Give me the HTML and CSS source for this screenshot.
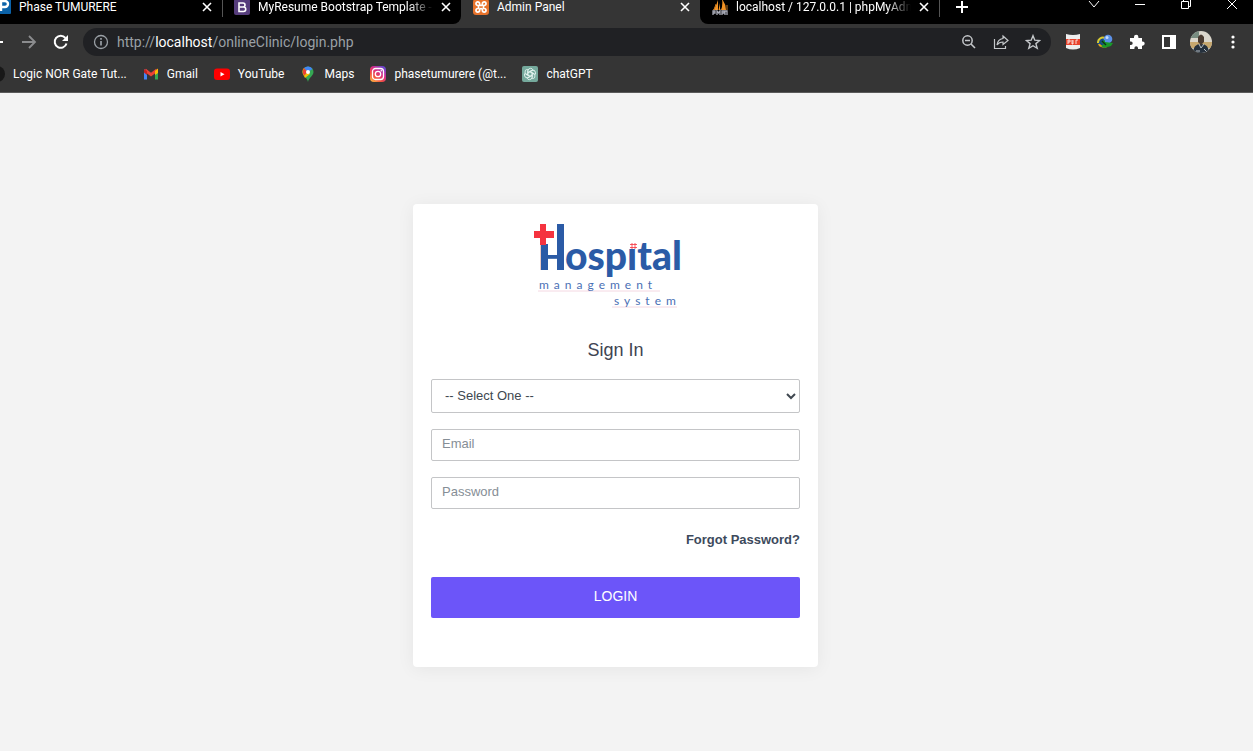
FILE: index.html
```html
<!DOCTYPE html>
<html lang="en">
<head>
<meta charset="utf-8">
<meta name="viewport" content="width=device-width, initial-scale=1">
<title>Admin Panel</title>
<link rel="stylesheet" href="styles.css">
</head>
<body>
<div class="window">
  <header class="browser">
    <div class="tabstrip">
      <div class="tab tab-first">
        <svg class="icon" viewBox="0 0 16 16"><rect y="-2" width="16" height="16" rx="1" fill="#0b62a8"/><path d="M6 11V1h4a3 3 0 0 1 0 6H6" fill="none" stroke="#fff" stroke-width="2.4"/></svg>
        <span class="tab-title">Phase TUMURERE</span>
        <button class="tab-close" aria-label="Close tab"><svg viewBox="0 0 10 10"><path d="M1 1l8 8M9 1l-8 8"/></svg></button>
      </div>
      <div class="tab tab-before">
        <svg class="icon" viewBox="0 0 16 16"><rect y="-1" width="16" height="16" rx="2" fill="#563d7c"/><path d="M5 3h4a2 2 0 0 1 0 4H5h4.500a2.200 2.200 0 0 1 0 4.500H5z" fill="none" stroke="#fff" stroke-width="1.600"/></svg>
        <span class="tab-title tab-title-long">MyResume Bootstrap Template -</span>
        <button class="tab-close" aria-label="Close tab"><svg viewBox="0 0 10 10"><path d="M1 1l8 8M9 1l-8 8"/></svg></button>
      </div>
      <div class="tab tab-active">
        <svg class="icon" viewBox="0 0 16 16"><rect y="-1" width="16" height="16" rx="3" fill="#e8732c"/><path d="M5.500 5.500H4.800a1.800 1.800 0 1 1 1.800-1.800q0 1.800 1.400 1.800t1.400-1.800a1.800 1.800 0 1 1 1.800 1.800h-.7v3h.7a1.800 1.800 0 1 1-1.800 1.800q0-1.800-1.400-1.800t-1.400 1.800a1.800 1.800 0 1 1-1.800-1.800h.7z" fill="none" stroke="#fff" stroke-width="1.700"/></svg>
        <span class="tab-title">Admin Panel</span>
        <button class="tab-close" aria-label="Close tab"><svg viewBox="0 0 10 10"><path d="M1 1l8 8M9 1l-8 8"/></svg></button>
      </div>
      <div class="tab tab-after">
        <svg class="icon" viewBox="0 0 16 16"><path d="M6 0v10H1Q5 5 6 0zM10-1q4 5 4 11H9q2-5 1-11zM8 3v7H6.500z" fill="#f39324"/><path d="M4 4L2 10M15 5v5" stroke="#c6781f"/><path d="M1 15v-4h2v2H1m4 2v-4l1.500 2L8 11v4m2 0v-4h2v2h-2m3 2v-4h2v4" fill="none" stroke="#aaacb8" stroke-width="1.300"/></svg>
        <span class="tab-title tab-title-long">localhost / 127.0.0.1 | phpMyAdm</span>
        <button class="tab-close" aria-label="Close tab"><svg viewBox="0 0 10 10"><path d="M1 1l8 8M9 1l-8 8"/></svg></button>
      </div>
      <button class="new-tab" aria-label="New tab"><svg viewBox="0 0 12 12"><path d="M6 0v12M0 6h12" stroke="#fff" stroke-width="2"/></svg></button>
      <div class="window-controls">
        <button aria-label="Search tabs"><svg viewBox="0 0 12 12"><path d="M1 2l5 6 5-6"/></svg></button>
        <button aria-label="Minimize"><svg viewBox="0 0 12 12"><path d="M1 5.500h10"/></svg></button>
        <button aria-label="Restore"><svg viewBox="0 0 12 12"><path d="M1.500 2.500h7v7h-7zM3.500 2V0.500h7v7H9"/></svg></button>
        <button aria-label="Close"><svg viewBox="0 0 12 12"><path d="M1 0l10 10M11 0L1 10"/></svg></button>
      </div>
    </div>

    <div class="toolbar">
      <button class="tool tool-back" aria-label="Back"><svg viewBox="0 0 16 16"><path d="M14 8H2M8 2L2 8l6 6" fill="none" stroke="#fff" stroke-width="2"/></svg></button>
      <button class="tool" aria-label="Forward"><svg viewBox="0 0 16 16"><path d="M1 8h13M8 2l6 6-6 6" fill="none" stroke="#8b8c8e" stroke-width="1.800"/></svg></button>
      <button class="tool" aria-label="Reload"><svg viewBox="0 0 16 16"><path d="M13.500 9.500A6 6 0 1 1 12.400 4" fill="none" stroke="#fff" stroke-width="2"/><path d="M15 1v6H9z" fill="#fff"/></svg></button>
      <div class="omnibox">
        <svg class="icon" viewBox="0 0 16 16"><circle cx="8" cy="8" r="6.500" fill="none" stroke="#9aa0a6" stroke-width="1.300"/><path d="M8 7v4.500M8 4v1.700" stroke="#9aa0a6" stroke-width="1.700"/></svg>
        <span class="url">http://<b>localhost</b>/onlineClinic/login.php</span>
        <button class="tool" aria-label="Zoom"><svg viewBox="0 0 16 16"><path d="M10 10l4 4M4 6.500h5" stroke="#c4c7ca" stroke-width="1.600"/><circle cx="6.500" cy="6.500" r="4.700" fill="none" stroke="#c4c7ca" stroke-width="1.500"/></svg></button>
        <button class="tool" aria-label="Share"><svg viewBox="0 0 16 16"><path d="M1.500 5v9.500h11V12M10 2l5 4.500-5 4V8Q6 8 4 11q.5-5.500 6-6.500z" fill="none" stroke="#c4c7ca" stroke-width="1.200"/></svg></button>
        <button class="tool" aria-label="Bookmark this page"><svg viewBox="0 0 16 16"><path d="M8 1.700l1.800 4.500 4.900.3-3.800 3.100 1.300 4.700L8 11.700l-4.200 2.600 1.300-4.700L1.300 6.500l4.900-.3z" fill="none" stroke="#c4c7ca" stroke-width="1.400"/></svg></button>
      </div>
      <div class="extensions">
        <button class="tool" aria-label="PDF extension"><svg viewBox="0 0 16 16"><path d="M1 0q7 2 14 0v14q-7 3-14 0z" fill="#eee"/><path d="M1 5h14v6H1z" fill="#e9432c"/><path d="M3 10V6h2v2H3M7 6v4h1V6M11 10V6h2" fill="none" stroke="#fff" stroke-width=".8"/></svg></button>
        <button class="tool" aria-label="Download manager"><svg viewBox="0 0 16 16"><ellipse cx="6" cy="8" rx="6" ry="5" fill="#174a86"/><path d="M1 9a5 5 0 0 1 7-5" fill="none" stroke="#d9c92e" stroke-width="2"/><path d="M2 10a5 3 0 0 0 8 2" fill="none" stroke="#e2a516" stroke-width="2"/><circle cx="11" cy="5" r="4.300" fill="#5c91e8"/><circle cx="10" cy="3.500" r="1.500" fill="#c4dbfb"/><path d="M4 8l4-2v2l8 1-2 3-7 2-3-2 3-2z" fill="#189a28"/><path d="M5 7l4 4" stroke="#0c2d18" stroke-width="1.500"/></svg></button>
        <button class="tool" aria-label="Extensions"><svg viewBox="0 0 16 16"><path d="M1 4h4V3a2.200 2.200 0 0 1 4.400 0v1H13v3.500h.6a2.100 2.100 0 0 1 0 4.200H13V15H9v-1a1.800 1.800 0 0 0-3.600 0v1H1v-4h1a1.700 1.700 0 0 0 0-3.400H1z" fill="#fff"/></svg></button>
        <button class="tool" aria-label="Side panel"><svg viewBox="0 0 16 16"><path d="M1 1h14v14H1zm2 2v10h6V3z" fill="#fff" fill-rule="evenodd"/></svg></button>
        <button class="tool tool-avatar" aria-label="Profile"><svg viewBox="0 0 22 22"><defs><clipPath id="face"><circle cx="11" cy="11" r="11"/></clipPath></defs><g clip-path="url(#face)"><path d="M0 0h22v22H0z" fill="#dad6cb"/><path d="M0 11h22v6H0z" fill="#c6a76e"/><path d="M0 0h9v7H0z" fill="#788c80"/><path d="M3 22q0-9 8-9t8 9z" fill="#26313d"/><path d="M8 6q3-5 6 0v5l-3 3-3-3z" fill="#4a3b30"/><path d="M9 13l2 4 3-4M6 20h4M14 18l3 3" fill="none" stroke="#bac1c6"/></g></svg></button>
        <button class="tool" aria-label="Menu"><svg viewBox="0 0 16 16"><circle cx="8" cy="3" r="1.600" fill="#fff"/><circle cx="8" cy="8" r="1.600" fill="#fff"/><circle cx="8" cy="13" r="1.600" fill="#fff"/></svg></button>
      </div>
    </div>

    <nav class="bookmarks">
      <a href="#"><svg class="icon" viewBox="0 0 16 16"><circle cx="8" cy="8" r="8" fill="#181818"/></svg><span>Logic NOR Gate Tut...</span></a>
      <a href="#"><svg class="icon" viewBox="0 0 16 16"><path d="M1 3v10.500h3V5z" fill="#4285f4"/><path d="M12 5v8.500h3V3z" fill="#34a853"/><path d="M2 4l6 4.700L14 4" fill="none" stroke="#ea4335" stroke-width="3"/><path d="M12 5l3-2.500V7l-3 2z" fill="#fbbc04"/><path d="M1 3v3.500L4 9V5z" fill="#c5221f"/></svg><span>Gmail</span></a>
      <a href="#"><svg class="icon" viewBox="0 0 16 16"><rect y="2.500" width="16" height="11.500" rx="3" fill="#f00"/><path d="M6.500 6v4.500l4-2.250z" fill="#fff"/></svg><span>YouTube</span></a>
      <a href="#"><svg class="icon" viewBox="0 0 16 16"><path d="M8 .5a5.500 5.500 0 0 0-5.500 5.500c0 4 4.500 5 5.500 10 1-5 5.500-6 5.500-10A5.500 5.500 0 0 0 8 .5z" fill="#34a853"/><path d="M8 6L4 10A7 7 0 0 1 2.500 6 5 5 0 0 1 4 2z" fill="#fbbc04"/><path d="M4 2l4 4-4 3.500A7 7 0 0 1 4 2z" fill="#ea4335"/><path d="M4 2a5.500 5.500 0 0 1 8.500 1L8 6z" fill="#4285f4"/><path d="M4 10l4-4 2 2-5 4z" fill="#fbbc04"/><circle cx="8" cy="6" r="2" fill="#fff"/></svg><span>Maps</span></a>
      <a href="#"><svg class="icon" viewBox="0 0 16 16"><defs><linearGradient id="ig" x1="0" y1="1" x2=".8" y2="0"><stop offset="0" stop-color="#fdc844"/><stop offset=".35" stop-color="#f4533c"/><stop offset=".65" stop-color="#d62b8a"/><stop offset="1" stop-color="#6548d0"/></linearGradient></defs><rect width="16" height="16" rx="4" fill="url(#ig)"/><rect x="2.500" y="2.500" width="11" height="11" rx="3" fill="none" stroke="#fff" stroke-width="1.300"/><circle cx="8" cy="8" r="2.700" fill="none" stroke="#fff" stroke-width="1.300"/><circle cx="11.300" cy="4.700" r=".8" fill="#fff"/></svg><span>phasetumurere (@t...</span></a>
      <a href="#"><svg class="icon" viewBox="0 0 16 16"><rect width="16" height="16" rx="2" fill="#75a99c"/><g fill="none" stroke="#e4f3ef" stroke-width=".9"><path id="petal" d="M6 9V4.500a2.600 2.600 0 0 1 5-.5M6 6.500l4-2.300"/><use href="#petal" transform="rotate(60 8 8)"/><use href="#petal" transform="rotate(120 8 8)"/><use href="#petal" transform="rotate(180 8 8)"/><use href="#petal" transform="rotate(240 8 8)"/><use href="#petal" transform="rotate(300 8 8)"/></g></svg><span>chatGPT</span></a>
    </nav>
  </header>

  <main class="page">
    <form class="card">
      <svg class="logo" viewBox="0 0 180 110" role="img" aria-label="Hospital management system">
        <g class="logo-name"><text class="logo-initial" x="12" y="60">H</text><text x="39" y="60">ospital</text></g>
        <path d="M15 34h7v26h-7zM31 14h7v46h-7z" fill="#2b5ba6"/>
        <path d="M102 26h10v13h-10z" fill="#fff"/>
        <path d="M14 14h6v7h8v7h-8v7h-6v-7H8v-7h6z" fill="#f5333f"/>
        <path d="M106 33v6M109 33v6M104 34.500h7M104 37.500h7" stroke="#f5333f" stroke-width="1" stroke-opacity=".8"/>
        <path d="M12 81h122M86 97h65" stroke="#f4d8e2" stroke-width="1"/>
        <g class="logo-sub"><text x="13" y="79">management</text><text x="88" y="95">system</text></g>
      </svg>
      <h1>Sign In</h1>
      <select class="field field-select" aria-label="User type"><option>-- Select One --</option></select>
      <input class="field" type="email" placeholder="Email" aria-label="Email">
      <input class="field" type="password" placeholder="Password" aria-label="Password">
      <a class="forgot" href="#">Forgot Password?</a>
      <button class="login" type="submit">LOGIN</button>
    </form>
  </main>
</div>
</body>
</html>
```
FILE: styles.css
```css
* { box-sizing: border-box; }

body {
  margin: 0;
  background: #f3f3f3;
  font-family: "Liberation Sans", Arial, sans-serif;
}

button {
  border: 0;
  padding: 0;
  background: none;
  cursor: pointer;
}

a { text-decoration: none; }

svg { display: block; }

.window {
  display: flex;
  flex-direction: column;
  min-height: 100vh;
}

.browser {
  overflow: hidden;
  background: #353535;
  border-bottom: 1px solid #5a5a5a;
  color: #fff;
  font-family: Roboto, "Open Sans", sans-serif;
  font-size: 12px;
}

.icon {
  flex: none;
  width: 16px;
  height: 16px;
  overflow: visible;
}

.tabstrip {
  display: flex;
  height: 24px;
  background: #353535;
}

.tab {
  display: flex;
  flex: 0 1 239px;
  align-items: flex-start;
  min-width: 0;
  padding: 0 10px 0 12px;
  background: #000;
}

.tab-first { margin-left: -17px; }

.tab-before {
  border-bottom-right-radius: 8px;
  background: linear-gradient(#555, #555) left top / 1px 17px no-repeat #000;
}

.tab-active { background: #353535; }

.tab-after { border-bottom-left-radius: 8px; }

.tab-title {
  flex: 1;
  min-width: 0;
  margin: 0 8px;
  line-height: 14px;
  white-space: nowrap;
}

.tab-title-long {
  overflow: hidden;
  mask-image: linear-gradient(to left, transparent, #000 24px);
}

.tab-close {
  width: 10px;
  height: 14px;
}

.tab-close svg { width: 10px; height: 10px; stroke: #fff; stroke-width: 1.600; }

.new-tab {
  display: flex;
  align-items: flex-start;
  width: 40px;
  padding: 1px 0 0 17px;
  background: linear-gradient(#555, #555) left top / 1px 17px no-repeat #000;
}

.new-tab svg { width: 12px; height: 12px; }

.window-controls {
  display: flex;
  flex: 1;
  align-items: flex-start;
  justify-content: flex-end;
  gap: 34px;
  padding-right: 15px;
  background: #000;
}

.window-controls svg {
  width: 12px;
  height: 12px;
  margin-top: -1px;
  overflow: visible;
  fill: none;
  stroke: #fff;
}

.toolbar {
  display: flex;
  align-items: center;
  gap: 16px;
  height: 36px;
  padding-right: 12px;
}

.tool {
  flex: none;
  width: 16px;
  height: 16px;
}

.tool-back { margin-left: -11px; }

.omnibox {
  display: flex;
  flex: 1;
  align-items: center;
  gap: 16px;
  height: 28px;
  margin-left: -2px;
  padding: 0 10px;
  border-radius: 14px;
  background: #202124;
}

.url {
  flex: 1;
  margin-left: -8px;
  color: #9aa0a6;
  font-size: 14px;
}

.url b { color: #fff; font-weight: 400; }

.extensions {
  display: flex;
  align-items: center;
  gap: 16px;
  margin-left: -2px;
}

.tool-avatar {
  width: 22px;
  height: 22px;
  margin: 0 -3px;
}

.bookmarks {
  display: flex;
  align-items: center;
  gap: 16px;
  height: 32px;
  padding-bottom: 4px;
  margin-left: -11px;
}

.bookmarks a {
  display: flex;
  align-items: center;
  gap: 8px;
  color: #fff;
  white-space: nowrap;
}

.page {
  display: flex;
  flex: 1;
  align-items: flex-start;
  justify-content: center;
  padding: 111px 22px 84px 0;
}

.card {
  display: flex;
  flex-direction: column;
  width: 405px;
  max-width: 100%;
  padding: 6px 18px 49px;
  border-radius: 4px;
  background: #fff;
  box-shadow: 0 2px 18px rgba(0, 0, 0, 0.06);
}

.logo {
  align-self: center;
  width: 180px;
  height: 110px;
}

.logo-name {
  fill: #2b5ba6;
  font: 900 39px Lato, sans-serif;
}

.logo-initial { font-size: 36px; }

.logo-sub {
  fill: #4a70b5;
  font: 400 12px Lato, sans-serif;
  letter-spacing: 5px;
}

h1 {
  margin: 19px 0 17px;
  color: #404452;
  font-size: 18px;
  font-weight: 400;
  line-height: 23px;
  text-align: center;
}

.field {
  width: 100%;
  height: 32px;
  margin: 0 0 16px;
  padding: 0 10px 4px;
  border: 1px solid #c4c5c7;
  border-radius: 2px;
  background: #fff;
  color: #404850;
  font-family: inherit;
  font-size: 13px;
}

.field-select { height: 34px; padding: 0 0 2px 9px; }

.field::placeholder { color: #868e96; }

.forgot {
  align-self: flex-end;
  margin: 6px 0 28px;
  color: #3d4a5c;
  font-size: 13px;
  font-weight: 700;
  line-height: 18px;
}

.login {
  height: 41px;
  padding-bottom: 4px;
  border-radius: 2px;
  background: #6c55f9;
  color: #fff;
  font-family: inherit;
  font-size: 14px;
}
```
